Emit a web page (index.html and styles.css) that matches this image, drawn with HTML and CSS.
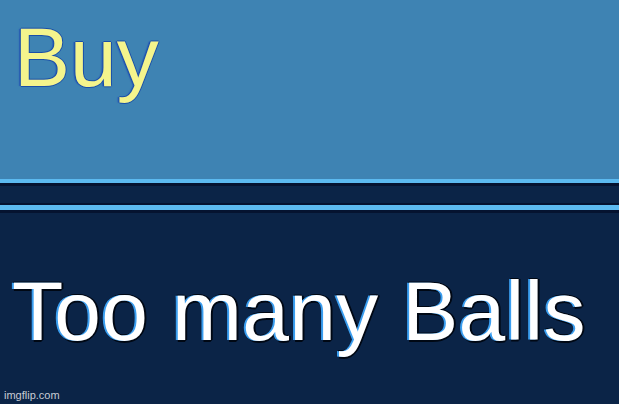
FILE: index.html
```html
<!DOCTYPE html>
<html lang="en">
<head>
    <meta charset="UTF-8">
    <meta name="viewport" content="width=device-width, initial-scale=1.0">
    <title>Buy</title>
    <link rel="stylesheet" href="styles.css">
</head>
<body>
    <div class="screen">
        <div class="top-panel">
            <h1 class="title">Buy</h1>
        </div>

        <!-- double rule between the two panels -->
        <div class="divider">
            <div class="rule"></div>
            <div class="gap"></div>
            <div class="rule"></div>
        </div>

        <div class="bottom-panel">
            <p class="message">Too many Balls</p>
        </div>

        <span class="watermark">imgflip.com</span>
    </div>
</body>
</html>
```

FILE: styles.css
```css
body {
    margin: 0;
    padding: 0;
    font-family: "Liberation Sans", Arial, sans-serif;
    background-color: #0b2447;
}

.screen {
    position: relative;
    width: 619px;
    height: 404px;
    overflow: hidden;
    display: flex;
    flex-direction: column;
}

.top-panel {
    height: 179px;
    background-color: #3e83b3;
    padding: 0 0 0 14px;
}

.title {
    margin: 0;
    padding-top: 15px;
    font-size: 84px;
    font-weight: normal;
    line-height: 84px;
    color: #f4f48c;
    text-shadow: -1px 0 #1a4fa8, 1px 0 #1a4fa8, 0 -1px #1a4fa8, 0 1px #1a4fa8,
                 -2px 0 1px #2a5fb5;
}

.divider {
    display: flex;
    flex-direction: column;
    background-color: #0b2447;
}

.rule {
    height: 4px;
    background-color: #5cbaf0;
    border-bottom: 3px solid #051330;
}

.divider .rule:last-child {
    border-top: 2px solid #051330;
    height: 5px;
}

.gap {
    height: 17px;
}

.bottom-panel {
    flex: 1;
    background-color: #0b2447;
    padding: 0 0 0 12px;
}

.message {
    margin: 0;
    padding-top: 56px;
    font-size: 84px;
    line-height: 84px;
    letter-spacing: 0.3px;
    color: #ffffff;
    text-shadow: -2px 0 #3a9ef0, 0 -1px #000814, 0 2px #000814, 2px 0 #000814,
                 -1px -1px #000814, 1px 1px #000814;
}

.watermark {
    position: absolute;
    left: 4px;
    bottom: 3px;
    font-size: 11px;
    color: #c8ccd4;
}
```
